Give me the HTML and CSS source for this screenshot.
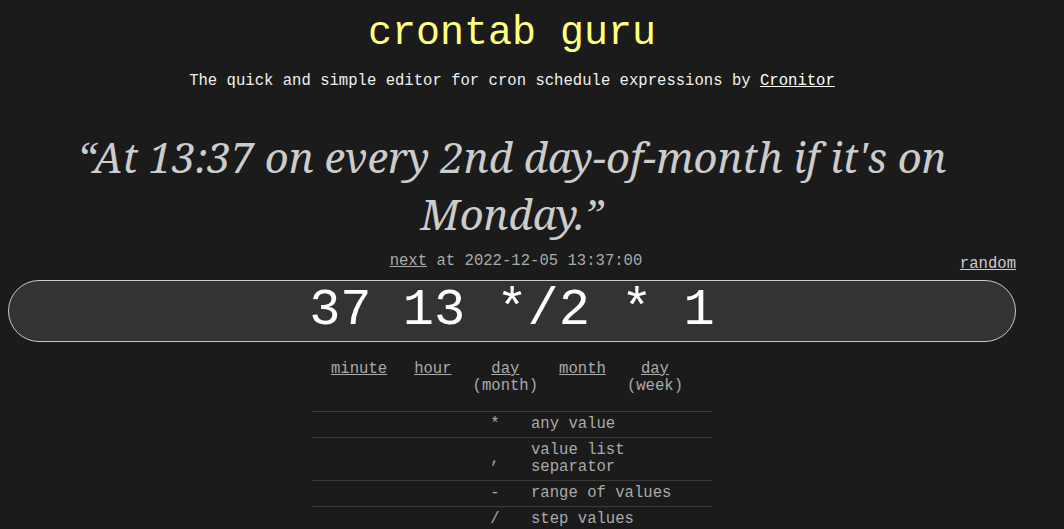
FILE: index.html
```html
<!DOCTYPE html>
<html>
<head>
<meta charset="utf-8">
<link rel="stylesheet" href="styles.css">
</head>
<body>
<div class="page">
  <h1 class="title">crontab guru</h1>
  <p class="tagline">The quick and simple editor for cron schedule expressions by <a href="#">Cronitor</a></p>
  <div class="human">“At 13:37 on every 2nd day-of-month if it's on Monday.”</div>
  <div class="nextrow">
    <span></span>
    <span class="next"><a href="#">next</a> at 2022-12-05 13:37:00</span>
    <a class="random" href="#">random</a>
  </div>
  <div class="expr">37 13 */2 * 1</div>
  <div class="parts">
    <div class="part first"><a href="#">minute</a></div>
    <div class="part"><a href="#">hour</a></div>
    <div class="part"><a href="#">day</a><span>(month)</span></div>
    <div class="part"><a href="#">month</a></div>
    <div class="part"><a href="#">day</a><span>(week)</span></div>
  </div>
  <table class="legend">
    <tr><th></th><td class="sym">*</td><td class="desc">any value</td></tr>
    <tr><th></th><td class="sym">,</td><td class="desc">value list separator</td></tr>
    <tr><th></th><td class="sym">-</td><td class="desc">range of values</td></tr>
    <tr><th></th><td class="sym">/</td><td class="desc">step values</td></tr>
  </table>
</div>
</body>
</html>
```
FILE: styles.css
```css
html, body {
  background: #1b1b1b;
}
body {
  margin: 0;
  font-family: "Liberation Mono", "Cousine", monospace;
  color: #eeeeee;
  overflow: hidden;
}
.page {
  width: 1008px;
  margin-left: 8px;
}
a {
  color: inherit;
}
.title {
  margin: 10px 0 0;
  font-size: 40px;
  line-height: 48px;
  font-weight: normal;
  color: #ffff80;
  text-align: center;
}
.tagline {
  margin: 13px 0 0;
  font-size: 15.6px;
  line-height: 20px;
  text-align: center;
  color: #f0f0f0;
}
.tagline a {
  color: #ffffff;
}
.human {
  margin-top: 37px;
  font-family: "Noto Serif", "DejaVu Serif", serif;
  font-style: italic;
  font-size: 41.7px;
  line-height: 57px;
  text-align: center;
  color: #cccccc;
}
.nextrow {
  display: grid;
  grid-template-columns: 1fr auto 1fr;
  font-size: 15.6px;
  line-height: 18px;
  color: #aaaaaa;
  margin-top: 10px;
}
.next {
  padding-left: 8px;
}
.random {
  justify-self: end;
  align-self: end;
  position: relative;
  top: 3px;
  color: #cccccc;
}
.expr {
  margin-top: 10px;
  height: 60px;
  border: 1px solid #c8c8c8;
  border-radius: 31px;
  background: #333333;
  color: #ffffff;
  font-size: 52px;
  line-height: 60px;
  text-align: center;
}
.parts {
  display: flex;
  justify-content: center;
  gap: 21px;
  padding-right: 10px;
  margin-top: 19px;
  font-size: 15.6px;
  line-height: 17px;
  color: #aaaaaa;
}
.part {
  display: flex;
  flex-direction: column;
  align-items: center;
}
.part.first {
  margin-right: 6px;
}
.legend {
  margin: 16px auto 0;
  width: 400px;
  border-collapse: collapse;
  font-size: 15.6px;
  line-height: 17px;
  color: #aaaaaa;
}
.legend tr {
  border-top: 1px solid #3a3a3a;
}
.legend th {
  width: 168px;
  padding: 0;
}
.legend td {
  padding: 4px 0;
  vertical-align: middle;
}
.legend .sym {
  width: 30px;
  text-align: center;
  padding-right: 10px;
}
.legend .desc {
  padding-left: 11px;
  padding-right: 10px;
}
```
